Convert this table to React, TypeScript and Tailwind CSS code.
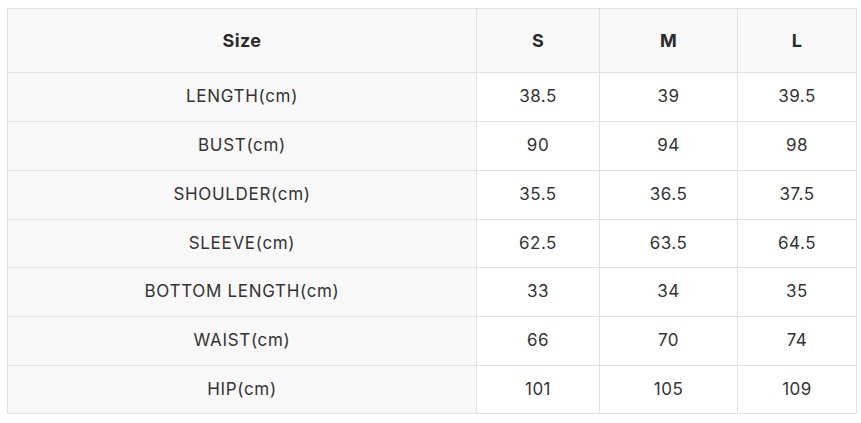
import React from "react";

const rows: [string, string, string, string, string][] = [
  ["LENGTH(cm)", "38.5", "39", "39.5", "h-[49px]"],
  ["BUST(cm)", "90", "94", "98", "h-[49px]"],
  ["SHOULDER(cm)", "35.5", "36.5", "37.5", "h-[49px]"],
  ["SLEEVE(cm)", "62.5", "63.5", "64.5", "h-[48px]"],
  ["BOTTOM LENGTH(cm)", "33", "34", "35", "h-[49px]"],
  ["WAIST(cm)", "66", "70", "74", "h-[49px]"],
  ["HIP(cm)", "101", "105", "109", "h-[48px]"],
];

export default function App() {
  return (
    <div className="w-[861px] h-[423px] bg-white pl-[7px] pt-[8px]" style={{ fontFamily: "Inter, 'Noto Sans', sans-serif" }}>
      <table className="border-collapse table-fixed w-[849px] text-[#333]">
        <colgroup>
          <col className="w-[469px]" />
          <col className="w-[123px]" />
          <col className="w-[138px]" />
          <col className="w-[119px]" />
        </colgroup>
        <thead>
          <tr className="h-[64px] bg-[#f8f8f8]">
            {["Size", "S", "M", "L"].map((h) => (
              <th key={h} className="border border-[#e2e2e2] p-0 text-[18px] font-bold text-center text-[#2a2a2a] tracking-[0.02em]">
                {h}
              </th>
            ))}
          </tr>
        </thead>
        <tbody>
          {rows.map((r) => (
            <tr key={r[0]} className={r[4]}>
              <td className="border border-[#e2e2e2] p-0 bg-[#f8f8f8] text-center text-[17px] tracking-[0.04em]">{r[0]}</td>
              <td className="border border-[#e2e2e2] p-0 bg-white text-center text-[17px] tracking-[0.03em]">{r[1]}</td>
              <td className="border border-[#e2e2e2] p-0 bg-white text-center text-[17px] tracking-[0.03em]">{r[2]}</td>
              <td className="border border-[#e2e2e2] p-0 bg-white text-center text-[17px] tracking-[0.03em]">{r[3]}</td>
            </tr>
          ))}
        </tbody>
      </table>
    </div>
  );
}
